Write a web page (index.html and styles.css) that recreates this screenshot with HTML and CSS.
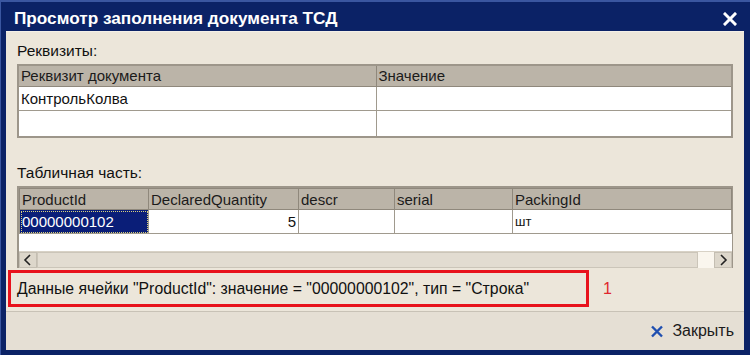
FILE: index.html
```html
<!DOCTYPE html>
<html lang="ru">

<head>
    <meta charset="UTF-8">
    <meta name="viewport" content="width=device-width, initial-scale=1.0">
    <title>Просмотр заполнения документа ТСД</title>
    <link rel="stylesheet" href="styles.css">
</head>

<body>

    <div class="window">

        <div class="titlebar">
            <span class="title">Просмотр заполнения документа ТСД</span>
            <span class="close">
                <svg width="14" height="14" viewBox="0 0 14 14">
                    <path d="M2 2 L12 12 M12 2 L2 12" stroke="#fff" stroke-width="3" stroke-linecap="square" />
                </svg>
            </span>
        </div>

        <div class="content">
            <div class="section-label">Реквизиты:</div>

            <table class="grid props">
                <thead>
                    <tr>
                        <th class="col-half">Реквизит документа</th>
                        <th>Значение</th>
                    </tr>
                </thead>
                <tbody>
                    <tr class="row">
                        <td>КонтрольКолва</td>
                        <td></td>
                    </tr>
                    <tr class="row empty">
                        <td></td>
                        <td></td>
                    </tr>
                </tbody>
            </table>

            <div class="section-label label-table">Табличная часть:</div>

            <div class="grid-box">
                <table class="grid lines">
                    <thead>
                        <tr>
                            <th class="c1">ProductId</th>
                            <th class="c2">DeclaredQuantity</th>
                            <th class="c3">descr</th>
                            <th class="c4">serial</th>
                            <th>PackingId</th>
                        </tr>
                    </thead>
                    <tbody>
                        <tr class="row">
                            <td class="selected">00000000102</td>
                            <td class="num">5</td>
                            <td></td>
                            <td></td>
                            <td class="small">шт</td>
                        </tr>
                    </tbody>
                </table>
                <div class="filler"></div>
                <div class="hscroll">
                    <span class="sbtn">
                        <svg width="10" height="12" viewBox="0 0 10 12">
                            <path d="M7 1 L2 6 L7 11" fill="none" stroke="#222" stroke-width="1.6" />
                        </svg>
                    </span>
                    <span class="thumb"></span>
                    <span class="track"></span>
                    <span class="sbtn">
                        <svg width="10" height="12" viewBox="0 0 10 12">
                            <path d="M3 1 L8 6 L3 11" fill="none" stroke="#222" stroke-width="1.6" />
                        </svg>
                    </span>
                </div>
            </div>

            <div class="status-row">
                <div class="cell-info">Данные ячейки "ProductId": значение = "00000000102", тип = "Строка"</div>
                <span class="marker">1</span>
            </div>
        </div>

        <div class="footer">
            <span class="close-button">
                <svg width="14" height="13" viewBox="0 0 14 13">
                    <path d="M2 1.5 L12 11.5 M12 1.5 L2 11.5" stroke="#1f4fb0" stroke-width="2.4" />
                </svg>
                Закрыть
            </span>
        </div>

    </div>

</body>

</html>
```

FILE: styles.css
```css
* {
    margin: 0;
    box-sizing: border-box;
}

body {
    font-family: 'Liberation Sans', Arial, sans-serif;
    font-size: 15px;
    color: #111;
    background-color: #0b2266;
    width: 750px;
    height: 355px;
    overflow: hidden;
}

.window {
    height: 355px;
    background-color: #0b2266;
    border-top: 2px solid #3a56a0;
    border-left: 1px solid #3a56a0;
    padding: 0 6px 5px 5px;
    display: flex;
    flex-direction: column;
}

.titlebar {
    height: 29px;
    display: flex;
    align-items: center;
    justify-content: space-between;
    padding: 0 7px 0 8px;
}

.title {
    color: #fff;
    font-weight: bold;
    font-size: 17.2px;
    margin-top: 3px;
}

.close {
    display: flex;
    margin-top: 5px;
}

.content {
    background-color: #ece6da;
    padding: 9px 11px 4px 11px;
    border-top: 1px solid #f4f0e8;
}

.section-label {
    height: 20px;
    line-height: 20px;
    margin-bottom: 3px;
    font-size: 15.5px;
}

.label-table {
    margin-top: 25px;
}

.grid {
    width: 716px;
    border-collapse: collapse;
    table-layout: fixed;
    background-color: #fff;
}

.props {
    border: 2px solid #9d968a;
}

.grid th {
    background-color: #bbb4a8;
    font-weight: normal;
    text-align: left;
    height: 21px;
    padding: 0 2px;
    border: 1px solid #8f887c;
    color: #1b1b1b;
    white-space: nowrap;
    overflow: hidden;
}

.grid td {
    border: 1px solid #a09a8e;
    padding: 0 2px;
    white-space: nowrap;
}

.props .row td {
    height: 24px;
}

.props .row.empty td {
    height: 27px;
}

.col-half {
    width: 358px;
}

.grid-box {
    width: 716px;
    border-left: 2px solid #9d968a;
    border-top: 2px solid #9d968a;
    border-right: 1px solid #9d968a;
    background-color: #fff;
}

.lines {
    width: 713px;
}

.lines .c1 {
    width: 129px;
}

.lines .c2 {
    width: 150px;
}

.lines .c3 {
    width: 96px;
}

.lines .c4 {
    width: 118px;
}

.lines .row td {
    height: 24px;
}

.lines td.selected {
    background-color: #0a1e78;
    color: #fff;
    outline: 1px dotted #d8d080;
    outline-offset: -2px;
}

.lines td.num {
    text-align: right;
}

.lines td.small {
    font-size: 13px;
}

.filler {
    height: 17px;
    background-color: #fff;
}

.hscroll {
    display: flex;
    height: 17px;
    background-color: #faf6ee;
    border-top: 1px solid #d8d2c6;
}

.sbtn {
    width: 18px;
    display: flex;
    align-items: center;
    justify-content: center;
    background-color: #ddd7cb;
    border: 1px solid #c4beb2;
}

.thumb {
    width: 661px;
    background-color: #e2dcd1;
    border: 1px solid #cbc5b9;
}

.track {
    flex: 1;
}

.status-row {
    display: flex;
    align-items: center;
    margin-top: 2px;
    margin-left: -9px;
}

.cell-info {
    width: 581px;
    height: 37px;
    border: 3px solid #e8121c;
    padding-left: 6px;
    display: flex;
    align-items: center;
    font-size: 15.8px;
}

.marker {
    color: #e0262e;
    font-size: 16px;
    margin-left: 14px;
}

.footer {
    flex: 1;
    background-color: #e5dfd4;
    border-top: 1px solid #c8c2b6;
    display: flex;
    align-items: center;
    justify-content: flex-end;
    padding-right: 10px;
}

.close-button {
    display: flex;
    align-items: center;
    gap: 8px;
    color: #1b1b1b;
    font-size: 16px;
}
```
